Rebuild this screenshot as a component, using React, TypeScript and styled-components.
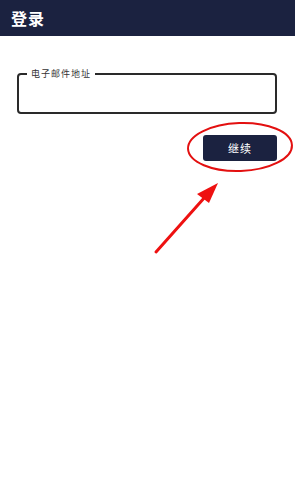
import styled, { createGlobalStyle } from "styled-components";

const GlobalStyle = createGlobalStyle`
  html, body {
    margin: 0;
    padding: 0;
    background: #ffffff;
    font-family: "Noto Sans CJK SC", "Noto Sans", sans-serif;
  }
`;

const Page = styled.div`
  position: relative;
  width: 295px;
  height: 482px;
  overflow: hidden;
  background: #ffffff;
`;

const Header = styled.header`
  height: 36px;
  background: #1b2240;
  display: flex;
  align-items: center;
  padding: 0 11px;
  box-sizing: border-box;
`;

const Title = styled.h1`
  margin: 0;
  color: #ffffff;
  font-size: 16px;
  font-weight: 700;
  letter-spacing: 1px;
`;

const Form = styled.div`
  padding: 33px 18px 0 17px;
  display: flex;
  flex-direction: column;
  align-items: stretch;
`;

const Field = styled.fieldset`
  margin: 0;
  height: 45px;
  box-sizing: border-box;
  border: 2px solid #2a2a2a;
  border-radius: 4px;
  padding: 0 8px;
`;

const Legend = styled.legend`
  padding: 0 4px;
  margin-left: 0;
  font-size: 9px;
  line-height: 10px;
  color: #333333;
  letter-spacing: 1px;
`;

const Actions = styled.div`
  display: flex;
  justify-content: flex-end;
  margin-top: 21px;
`;

const Button = styled.button`
  width: 74px;
  height: 26px;
  border: none;
  border-radius: 3px;
  background: #1b2240;
  color: #ffffff;
  font-family: inherit;
  font-size: 11px;
  letter-spacing: 1px;
`;

const Annotation = styled.svg`
  position: absolute;
  left: 0;
  top: 0;
  pointer-events: none;
`;

export default function App() {
  return (
    <>
      <GlobalStyle />
      <Page>
        <Header>
          <Title>登录</Title>
        </Header>
        <Form>
          <Field>
            <Legend>电子邮件地址</Legend>
          </Field>
          <Actions>
            <Button>继续</Button>
          </Actions>
        </Form>
        <Annotation width="295" height="482" viewBox="0 0 295 482">
          <ellipse
            cx="240"
            cy="147"
            rx="52"
            ry="24"
            fill="none"
            stroke="#e31010"
            strokeWidth="2"
            transform="rotate(-2 240 147)"
          />
          <line x1="156" y1="252" x2="205" y2="197" stroke="#ee1111" strokeWidth="3" strokeLinecap="round" />
          <polygon points="218,183 197,194 209,203" fill="#ee1111" />
        </Annotation>
      </Page>
    </>
  );
}
